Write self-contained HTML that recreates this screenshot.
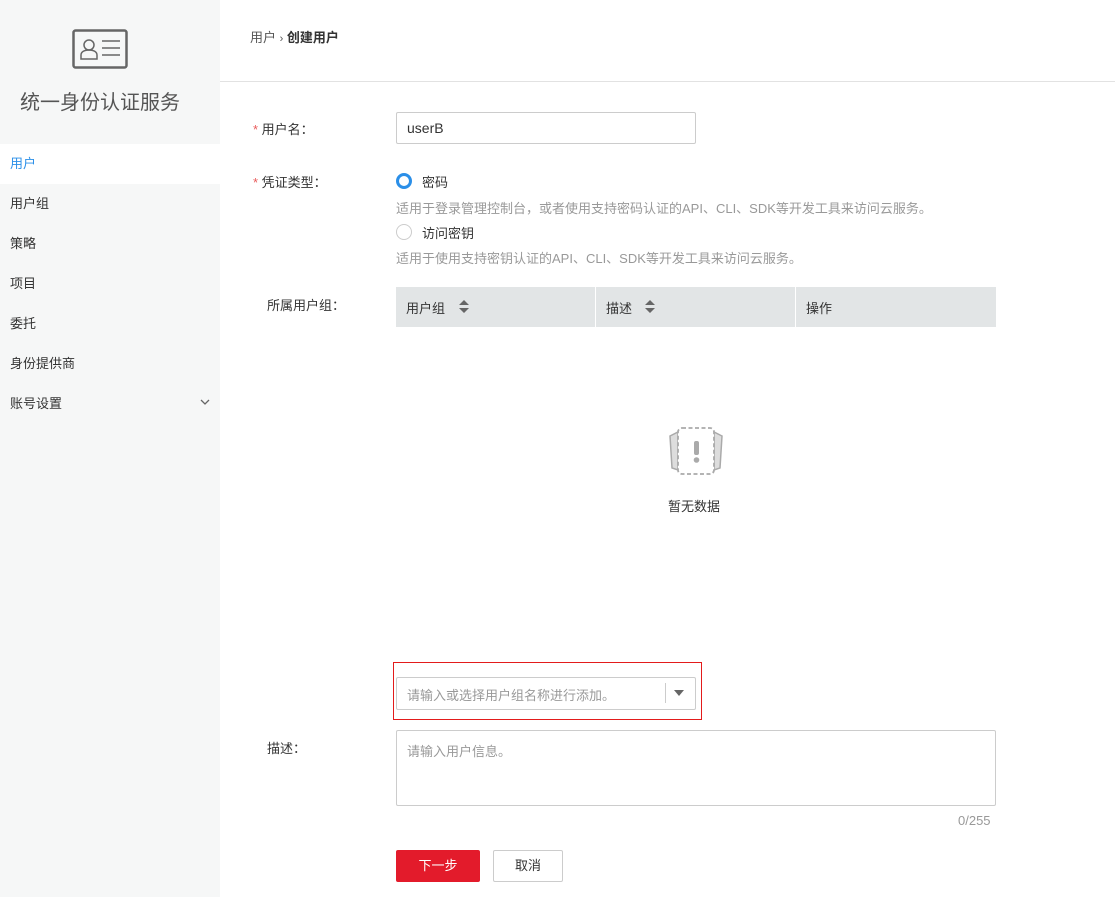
<!DOCTYPE html><html><head><meta charset="utf-8"><style>
body{margin:0;width:1115px;height:897px;font-family:"Liberation Sans","Noto Sans CJK SC",sans-serif;font-size:13px;color:#333;background:#fff;position:relative;overflow:hidden}
.side{position:absolute;left:0;top:0;width:220px;height:897px;background:#f6f7f7}
.nav{position:absolute;left:0;width:220px;height:40px;line-height:40px;padding-left:10px;box-sizing:border-box;font-size:13px;color:#333}
.a{position:absolute}
.lbl{position:absolute;font-size:13px;color:#333}
.star{color:#e95b5b}
.gray{color:#999;font-size:13px}
</style></head><body>
<div class="side">
<svg class="a" style="left:72px;top:29px" width="56" height="40" viewBox="0 0 56 40"><rect x="1.5" y="1.5" width="53" height="37" rx="2" fill="none" stroke="#666" stroke-width="2.5"/><circle cx="17" cy="16" r="5" fill="none" stroke="#666" stroke-width="1.5"/><path d="M9 30v-4c0-3 3-5 8-5s8 2 8 5v4z" fill="none" stroke="#666" stroke-width="1.5"/><path d="M30 12h18M30 19h18M30 26h18" stroke="#666" stroke-width="1.5"/></svg>
<div class="a" style="left:20px;top:86px;font-size:20px;color:#555">统一身份认证服务</div>
<div class="nav" style="top:144px;background:#fff;color:#2b8fe8">用户</div>
<div class="nav" style="top:184px">用户组</div>
<div class="nav" style="top:224px">策略</div>
<div class="nav" style="top:264px">项目</div>
<div class="nav" style="top:304px">委托</div>
<div class="nav" style="top:344px">身份提供商</div>
<div class="nav" style="top:384px">账号设置</div>
<svg class="a" style="left:200px;top:398px" width="10" height="8"><path d="M1 2l4 4 4-4" fill="none" stroke="#666" stroke-width="1.3"/></svg>
</div>
<div class="a" style="left:250px;top:27px;font-size:13px;color:#555">用户 <span style="font-size:11px">›</span> <b style="color:#333">创建用户</b></div>
<div class="a" style="left:220px;top:81px;width:895px;height:1px;background:#e2e2e2"></div>
<div class="lbl" style="left:253px;top:119px"><span class="star">*</span> 用户名：</div>
<div class="a" style="left:396px;top:112px;height:30px;border:1px solid #ccc;border-radius:2px;line-height:30px;padding-left:10px;font-size:14px;width:288px">userB</div>
<div class="lbl" style="left:253px;top:172px"><span class="star">*</span> 凭证类型：</div>
<div class="a" style="left:396px;top:173px;width:10px;height:10px;border-radius:50%;border:3px solid #2b8fe8"></div>
<div class="lbl" style="left:422px;top:172px">密码</div>
<div class="a gray" style="left:396px;top:198px">适用于登录管理控制台，或者使用支持密码认证的API、CLI、SDK等开发工具来访问云服务。</div>
<div class="a" style="left:396px;top:224px;width:14px;height:14px;border-radius:50%;border:1px solid #ccc"></div>
<div class="lbl" style="left:422px;top:223px">访问密钥</div>
<div class="a gray" style="left:396px;top:248px">适用于使用支持密钥认证的API、CLI、SDK等开发工具来访问云服务。</div>
<div class="lbl" style="left:267px;top:295px">所属用户组：</div>
<div class="a" style="left:396px;top:287px;width:600px;height:40px;background:#e2e5e6"></div>
<div class="a" style="left:595px;top:287px;width:1px;height:40px;background:#fff"></div>
<div class="a" style="left:795px;top:287px;width:1px;height:40px;background:#fff"></div>
<div class="lbl" style="left:406px;top:298px">用户组</div>
<svg class="a" style="left:459px;top:300px" width="10" height="13"><path d="M0 5L5 0 10 5zM0 8h10L5 13z" fill="#666"/></svg>
<div class="lbl" style="left:606px;top:298px">描述</div>
<svg class="a" style="left:645px;top:300px" width="10" height="13"><path d="M0 5L5 0 10 5zM0 8h10L5 13z" fill="#666"/></svg>
<div class="lbl" style="left:806px;top:298px">操作</div>
<svg class="a" style="left:668px;top:426px" width="56" height="50" viewBox="0 0 56 50"><path d="M2 10l8-4v38l-6-2z" fill="#ddd" stroke="#aaa" stroke-width="1.5"/><path d="M54 10l-8-4v38l6-2z" fill="#ddd" stroke="#aaa" stroke-width="1.5"/><rect x="10" y="2" width="36" height="46" rx="4" fill="#fff" stroke="#aaa" stroke-width="1.8" stroke-dasharray="4 2.5"/><rect x="26" y="15" width="5" height="14" rx="2" fill="#aaa"/><circle cx="28.5" cy="34" r="2.8" fill="#aaa"/></svg>
<div class="lbl" style="left:668px;top:496px">暂无数据</div>
<div class="a" style="left:393px;top:662px;width:307px;height:56px;border:1px solid #e31b1b"></div>
<div class="a" style="left:396px;top:677px;width:298px;height:31px;border:1px solid #ccc;border-radius:2px"></div>
<div class="a gray" style="left:407px;top:685px">请输入或选择用户组名称进行添加。</div>
<div class="a" style="left:665px;top:683px;width:1px;height:20px;background:#ccc"></div>
<svg class="a" style="left:674px;top:690px" width="10" height="6"><path d="M0 0h10L5 6z" fill="#666"/></svg>
<div class="lbl" style="left:267px;top:738px">描述：</div>
<div class="a" style="left:396px;top:730px;width:598px;height:74px;border:1px solid #ccc;border-radius:2px"></div>
<div class="a gray" style="left:407px;top:741px">请输入用户信息。</div>
<div class="a gray" style="left:958px;top:813px">0/255</div>
<div class="a" style="left:396px;top:850px;width:84px;height:32px;background:#e31b2b;color:#fff;text-align:center;line-height:32px;border-radius:2px">下一步</div>
<div class="a" style="left:493px;top:850px;width:68px;height:30px;border:1px solid #ccc;text-align:center;line-height:30px;border-radius:2px">取消</div>
</body></html>
